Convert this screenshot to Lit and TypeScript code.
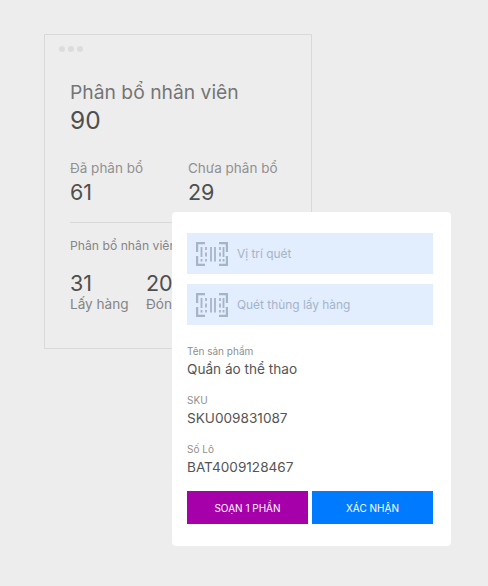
import { LitElement, html, css, svg } from "lit";
import { customElement } from "lit/decorators.js";

const scanIcon = svg`<svg class="icon" viewBox="0 0 32 24" width="32" height="24" fill="none" stroke="#a5b5c8">
  <path stroke-width="2.2" d="M9 1.1H1.1v9M9 22.9H1.1v-9M23 1.1h7.9v9M23 22.9h7.9v-9"/>
  <path stroke-width="1.8" d="M5.5 5v10M5.5 17v2.5M10 5v3M10 10.5v4M10 17v2.5M15 5v14.5M19 5v14.5M24 5v3M24 10.5v4M24 17v2.5M27.5 5v10M27.5 17v2.5"/>
</svg>`;

@customElement("app-root")
export class AppRoot extends LitElement {
  static styles = css`
    :host {
      display: block;
      position: relative;
      width: 488px;
      height: 586px;
      box-sizing: border-box;
      padding: 34px 0 0 44px;
      background: #ededed;
      font-family: "Inter", "Liberation Sans", sans-serif;
      overflow: hidden;
    }
    .back {
      box-sizing: border-box;
      width: 268px;
      height: 315px;
      border: 1px solid #d9d9d9;
      padding: 11px 0 0 25px;
      overflow: hidden;
    }
    .dots { display: flex; gap: 3px; margin-left: -11px; }
    .dots i { width: 6px; height: 6px; border-radius: 50%; background: #dcdcdc; }
    .title { margin-top: 28px; font-size: 19.3px; line-height: 24px; color: #757575; }
    .total { margin-top: 1px; font-size: 24.5px; line-height: 30px; color: #4f4f4f; }
    .two { display: flex; margin-top: 24px; }
    .two > div { width: 118px; }
    .lbl { font-size: 13.5px; line-height: 18px; color: #919191; white-space: nowrap; }
    .num { font-size: 21.5px; line-height: 28px; color: #4f4f4f; margin-top: 1px; }
    hr { width: 215px; margin: 16px 0 0; border: 0; border-top: 1px solid #d9d9d9; }
    .sub { margin-top: 14px; font-size: 12.2px; line-height: 18px; color: #858585; white-space: nowrap; }
    .stats { display: flex; margin-top: 14px; }
    .stats > div { width: 76px; }
    .stats .num { margin-top: 0; }
    .stats .cap { font-size: 13.6px; line-height: 14px; color: #858585; white-space: nowrap; }
    .pop {
      position: absolute;
      left: 172px;
      top: 212px;
      width: 279px;
      height: 334px;
      box-sizing: border-box;
      padding: 21px 18px 0 15px;
      background: #fff;
      border-radius: 4px;
    }
    .scan {
      display: flex;
      align-items: center;
      gap: 9px;
      height: 41px;
      margin-bottom: 10px;
      padding-left: 9px;
      background: #e2edfe;
      font-size: 11.9px;
      color: #a5b5c8;
    }
    .field { margin-top: 15px; }
    .scan + .field { margin-top: 20px; }
    .fl { font-size: 10px; line-height: 13px; color: #8f8f8f; }
    .fv { font-size: 13.6px; line-height: 20px; margin-top: 1px; color: #555; }
    .btns { display: flex; gap: 4px; margin-top: 14px; }
    .btn {
      flex: 1;
      height: 33px;
      display: flex;
      align-items: center;
      justify-content: center;
      font-size: 10px;
      color: #fff;
    }
    .purple { background: #a600ab; }
    .blue { background: #007bff; }
  `;

  render() {
    return html`
      <div class="back">
        <div class="dots"><i></i><i></i><i></i></div>
        <div class="title">Phân bổ nhân viên</div>
        <div class="total">90</div>
        <div class="two">
          <div><div class="lbl">Đã phân bổ</div><div class="num">61</div></div>
          <div><div class="lbl">Chưa phân bổ</div><div class="num">29</div></div>
        </div>
        <hr />
        <div class="sub">Phân bổ nhân viên</div>
        <div class="stats">
          <div><div class="num">31</div><div class="cap">Lấy hàng</div></div>
          <div><div class="num">20</div><div class="cap">Đóng gói</div></div>
        </div>
      </div>
      <div class="pop">
        <div class="scan">${scanIcon}<span>Vị trí quét</span></div>
        <div class="scan">${scanIcon}<span>Quét thùng lấy hàng</span></div>
        <div class="field"><div class="fl">Tên sản phẩm</div><div class="fv">Quần áo thể thao</div></div>
        <div class="field"><div class="fl">SKU</div><div class="fv">SKU009831087</div></div>
        <div class="field"><div class="fl">Số Lô</div><div class="fv">BAT4009128467</div></div>
        <div class="btns">
          <div class="btn purple">SOẠN 1 PHẦN</div>
          <div class="btn blue">XÁC NHẬN</div>
        </div>
      </div>
    `;
  }
}
